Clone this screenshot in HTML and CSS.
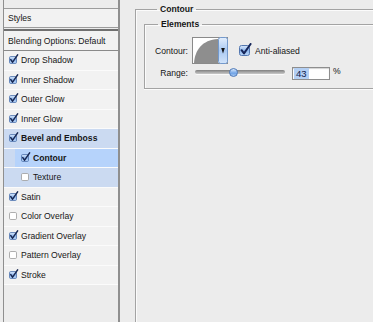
FILE: index.html
```html
<!DOCTYPE html>
<html>
<head>
<meta charset="utf-8">
<link rel="stylesheet" href="styles.css">
</head>
<body>
<svg class="defs" width="0" height="0" aria-hidden="true">
  <defs>
    <linearGradient id="cbg" x1="0" y1="0" x2="0" y2="1">
      <stop offset="0" stop-color="#dbe9fb"/>
      <stop offset="0.5" stop-color="#8fb8ee"/>
      <stop offset="1" stop-color="#b9d5f7"/>
    </linearGradient>
    <linearGradient id="ddg" x1="0" y1="0" x2="0" y2="1">
      <stop offset="0" stop-color="#e3eefc"/>
      <stop offset="0.5" stop-color="#a9c9f2"/>
      <stop offset="1" stop-color="#d2e4fa"/>
    </linearGradient>
  </defs>
</svg>
<div class="app">
  <aside class="side">
    <div class="styles-head">Styles</div>
    <div class="list">
      <div class="row blend">Blending Options: Default</div>
      <div class="row"><svg class="cb" viewBox="0 0 10 10"><rect x="0.5" y="2.5" width="7" height="7" rx="1.2" fill="url(#cbg)" stroke="#4f74ad" stroke-width="0.8"/><path d="M1.8 5.6 L3.6 8.2 L8.6 0.9" fill="none" stroke="#172752" stroke-width="1.5" stroke-linecap="round" stroke-linejoin="round"/></svg>Drop Shadow</div>
      <div class="row"><svg class="cb" viewBox="0 0 10 10"><rect x="0.5" y="2.5" width="7" height="7" rx="1.2" fill="url(#cbg)" stroke="#4f74ad" stroke-width="0.8"/><path d="M1.8 5.6 L3.6 8.2 L8.6 0.9" fill="none" stroke="#172752" stroke-width="1.5" stroke-linecap="round" stroke-linejoin="round"/></svg>Inner Shadow</div>
      <div class="row"><svg class="cb" viewBox="0 0 10 10"><rect x="0.5" y="2.5" width="7" height="7" rx="1.2" fill="url(#cbg)" stroke="#4f74ad" stroke-width="0.8"/><path d="M1.8 5.6 L3.6 8.2 L8.6 0.9" fill="none" stroke="#172752" stroke-width="1.5" stroke-linecap="round" stroke-linejoin="round"/></svg>Outer Glow</div>
      <div class="row"><svg class="cb" viewBox="0 0 10 10"><rect x="0.5" y="2.5" width="7" height="7" rx="1.2" fill="url(#cbg)" stroke="#4f74ad" stroke-width="0.8"/><path d="M1.8 5.6 L3.6 8.2 L8.6 0.9" fill="none" stroke="#172752" stroke-width="1.5" stroke-linecap="round" stroke-linejoin="round"/></svg>Inner Glow</div>
      <div class="row grp b"><svg class="cb" viewBox="0 0 10 10"><rect x="0.5" y="2.5" width="7" height="7" rx="1.2" fill="url(#cbg)" stroke="#4f74ad" stroke-width="0.8"/><path d="M1.8 5.6 L3.6 8.2 L8.6 0.9" fill="none" stroke="#172752" stroke-width="1.5" stroke-linecap="round" stroke-linejoin="round"/></svg>Bevel and Emboss</div>
      <div class="row grp sub b"><div class="ind sel"><svg class="cb" viewBox="0 0 10 10"><rect x="0.5" y="2.5" width="7" height="7" rx="1.2" fill="url(#cbg)" stroke="#4f74ad" stroke-width="0.8"/><path d="M1.8 5.6 L3.6 8.2 L8.6 0.9" fill="none" stroke="#172752" stroke-width="1.5" stroke-linecap="round" stroke-linejoin="round"/></svg>Contour</div></div>
      <div class="row grp sub"><div class="ind"><svg class="cb" viewBox="0 0 10 10"><rect x="0.5" y="2.5" width="7" height="7" rx="1.2" fill="#fff" stroke="#9a9a9a" stroke-width="0.8"/></svg>Texture</div></div>
      <div class="row"><svg class="cb" viewBox="0 0 10 10"><rect x="0.5" y="2.5" width="7" height="7" rx="1.2" fill="url(#cbg)" stroke="#4f74ad" stroke-width="0.8"/><path d="M1.8 5.6 L3.6 8.2 L8.6 0.9" fill="none" stroke="#172752" stroke-width="1.5" stroke-linecap="round" stroke-linejoin="round"/></svg>Satin</div>
      <div class="row"><svg class="cb" viewBox="0 0 10 10"><rect x="0.5" y="2.5" width="7" height="7" rx="1.2" fill="#fff" stroke="#9a9a9a" stroke-width="0.8"/></svg>Color Overlay</div>
      <div class="row"><svg class="cb" viewBox="0 0 10 10"><rect x="0.5" y="2.5" width="7" height="7" rx="1.2" fill="url(#cbg)" stroke="#4f74ad" stroke-width="0.8"/><path d="M1.8 5.6 L3.6 8.2 L8.6 0.9" fill="none" stroke="#172752" stroke-width="1.5" stroke-linecap="round" stroke-linejoin="round"/></svg>Gradient Overlay</div>
      <div class="row"><svg class="cb" viewBox="0 0 10 10"><rect x="0.5" y="2.5" width="7" height="7" rx="1.2" fill="#fff" stroke="#9a9a9a" stroke-width="0.8"/></svg>Pattern Overlay</div>
      <div class="row"><svg class="cb" viewBox="0 0 10 10"><rect x="0.5" y="2.5" width="7" height="7" rx="1.2" fill="url(#cbg)" stroke="#4f74ad" stroke-width="0.8"/><path d="M1.8 5.6 L3.6 8.2 L8.6 0.9" fill="none" stroke="#172752" stroke-width="1.5" stroke-linecap="round" stroke-linejoin="round"/></svg>Stroke</div>
    </div>
  </aside>
  <main class="main">
    <fieldset class="fs outer">
      <legend>Contour</legend>
      <fieldset class="fs inner">
        <legend>Elements</legend>
        <div class="frow r1">
          <span class="lbl">Contour:</span>
          <svg class="cpick" width="36" height="27" viewBox="0 0 36 27">
            <rect x="0.5" y="0.5" width="35" height="26" fill="#fff" stroke="#8a8a8a"/>
            <path d="M2 26 C3 13 10 3 26 2 L26 26 Z" fill="#8e8e8e"/>
            <rect x="26.5" y="0.5" width="9" height="26" rx="2" fill="url(#ddg)" stroke="#7399cc"/>
            <path d="M29.2 11 L32.8 11 L31 16.5 Z" fill="#111"/>
          </svg>
          <svg class="aa" width="13" height="13" viewBox="0 0 13 13">
            <rect x="0.5" y="2.5" width="10" height="10" rx="2" fill="url(#cbg)" stroke="#5377b0"/>
            <path d="M2.6 7.2 L5 10.4 L11.6 1" fill="none" stroke="#16265a" stroke-width="2" stroke-linecap="round" stroke-linejoin="round"/>
          </svg>
          <span class="aal">Anti-aliased</span>
        </div>
        <div class="frow r2">
          <span class="lbl">Range:</span>
          <div class="slider">
            <div class="track"></div>
            <div class="thumb"></div>
          </div>
          <div class="inp"><span class="selv">43</span></div>
          <span class="pct">%</span>
        </div>
      </fieldset>
    </fieldset>
  </main>
</div>
</body>
</html>
```
FILE: styles.css
```css
* { box-sizing: border-box; }
html, body { margin: 0; padding: 0; }
body {
  width: 373px;
  height: 322px;
  overflow: hidden;
  background: #ececec;
  font-family: "Liberation Sans", Arial, sans-serif;
  font-size: 8.6px;
  color: #161616;
}
.defs { display: block; width: 0; height: 0; overflow: hidden; }
.app { display: flex; align-items: flex-start; height: 322px; }

.side {
  flex: none;
  margin-left: 3px;
  width: 117px;
  height: 322px;
  border-left: 1px solid #8f8f8f;
  border-right: 2px solid #8f8f8f;
  padding-top: 8px;
  background: #ececec;
  overflow: hidden;
}
.styles-head {
  height: 20px;
  border-top: 1px solid #9c9c9c;
  border-bottom: 1px solid #9c9c9c;
  background: #f2f2f2;
  padding-left: 4px;
  display: flex;
  align-items: center;
}
.list { margin-top: 1px; border-top: 2px solid #707070; }
.row {
  height: 19.5px;
  border-bottom: 1px solid #fbfbfb;
  background: #f2f2f2;
  display: flex;
  align-items: center;
  padding-left: 5px;
  white-space: nowrap;
}
.row.blend { height: 20px; border-bottom-color: #8a8a8a; padding-left: 4px; }
.row.grp { background: #cbdaf1; }
.row.sub { padding-left: 0; align-items: stretch; }
.b { font-weight: bold; }
.ind {
  flex: 1;
  margin-left: 11px;
  padding-left: 6px;
  display: flex;
  align-items: center;
}
.ind.sel { background: #b6d3fb; }
.cb { width: 10px; height: 10px; flex: none; margin-right: 2px; margin-top: -2px; }

.main { flex: 1; min-width: 0; margin-left: 15px; height: 322px; overflow: hidden; }
.fs {
  margin: 0;
  padding: 0;
  min-width: 0;
  border: 1px solid #a3a3a3;
  border-right: 0;
  box-shadow: inset 1px 1px 0 #fbfbfb;
}
.fs legend {
  padding: 0 3px;
  margin-left: 13px;
  font-weight: bold;
  line-height: 11px;
}
.outer { margin-top: 4px; padding-left: 8px; height: 318px; border-bottom: 0; }
.inner { margin-top: 4px; padding: 7px 0 8px 0; box-shadow: inset 1px 1px 0 #fbfbfb, 0 1px 0 #fbfbfb; }

.frow { display: flex; align-items: center; white-space: nowrap; }
.r1 { height: 27px; }
.r2 { height: 13px; margin-top: 3px; align-items: flex-start; }
.lbl { width: 43px; margin-right: 4px; text-align: right; flex: none; }
.r2 .lbl { margin-right: 7px; line-height: 13px; }
.cpick { flex: none; margin-right: 11px; }
.aa { flex: none; margin-right: 3px; margin-top: -3px; }

.slider { position: relative; width: 90px; height: 13px; flex: none; margin-right: 7px; }
.track {
  margin-top: 3px;
  height: 4px;
  border-radius: 2px;
  background: linear-gradient(#7f7f7f, #c9c9c9);
  box-shadow: 0 1px 0 #fafafa;
}
.thumb {
  position: absolute;
  left: 34px;
  top: 1px;
  width: 9px;
  height: 9px;
  border-radius: 50%;
  border: 1px solid #4d79b8;
  background: linear-gradient(#d9e8fb, #6fa3e6 60%, #a7c9f3);
}
.inp {
  width: 38px;
  height: 13px;
  flex: none;
  background: #fff;
  border: 1px solid #8e8e8e;
  box-shadow: inset 0 1px 1px rgba(0,0,0,0.18);
  display: flex;
  align-items: center;
  padding-left: 1px;
}
.selv { background: #b3cff4; padding: 0 2px; line-height: 11px; font-size: 9.5px; color: #10214a; }
.pct { margin-left: 3px; line-height: 9px; }
```
